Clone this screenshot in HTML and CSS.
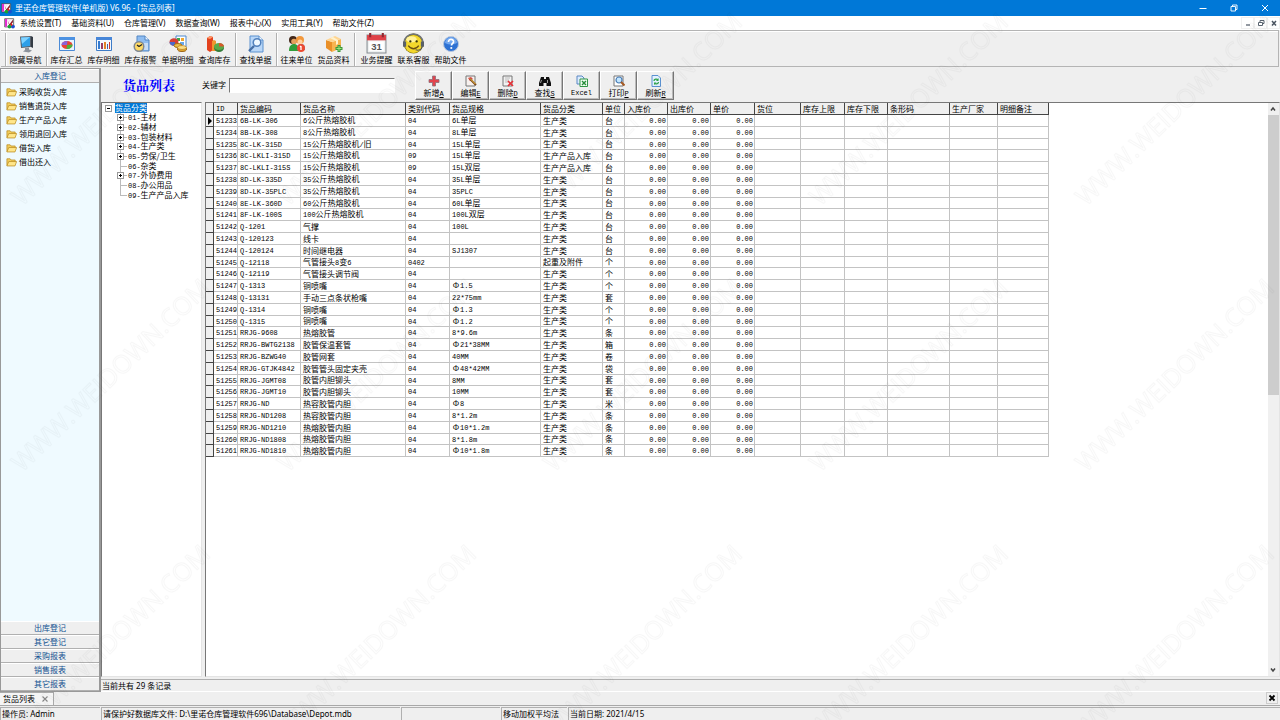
FILE: index.html
```html
<!DOCTYPE html>
<html lang="zh-CN">
<head>
<meta charset="utf-8">
<title>里诺仓库管理软件(单机版) V6.96 - [货品列表]</title>
<link rel="stylesheet" href="styles.css">
</head>
<body>
<svg width="0" height="0" class="defs" aria-hidden="true">
  <symbol id="logo" viewBox="0 0 16 16"><path d="M1 1h13v12H1z" fill="#fff" stroke="#333"/><path d="M1.500 1.500h3v11h-3z" fill="#e22bd0"/><path d="M5 3l3 6 5-7v4l-5 6z" fill="#8a1d2d"/><path d="M6 2h4l-2 4z" fill="#ffd8f0"/><circle cx="8" cy="12.500" r="2.800" fill="#16a533"/><circle cx="13" cy="12.500" r="2.800" fill="#1c4fd0"/><path d="M10 7l3 3-3 2z" fill="#e32218"/></symbol>
  <symbol id="folder" viewBox="0 0 12 12"><path d="M1 10V2.500h3.500l1 1.300H10V6" fill="#f3ce5c" stroke="#b98a1e" stroke-width=".8"/><path d="M1 10.300L3 5.500h8.600L9.800 10.300z" fill="#ffe68b" stroke="#b98a1e" stroke-width=".8"/></symbol>
</svg>

<header class="titlebar">
  <svg class="app-icon"><use href="#logo"/></svg>
  <h1 class="title">里诺仓库管理软件(单机版) V6.96 - [货品列表]</h1>
  <div class="window-buttons">
    <button aria-label="最小化"><svg viewBox="0 0 10 10"><path d="M1.500 5.500h7" stroke="#fff" fill="none"/></svg></button>
    <button aria-label="还原"><svg viewBox="0 0 10 10"><path d="M2 3.500h4.500V8H2zM3.500 3.500V2H8v4.500H6.500" stroke="#fff" fill="none" stroke-width=".9"/></svg></button>
    <button aria-label="关闭"><svg viewBox="0 0 10 10"><path d="M2 2l6 6M8 2L2 8" stroke="#fff" fill="none"/></svg></button>
  </div>
</header>

<nav class="menubar">
  <svg class="app-icon"><use href="#logo"/></svg>
  <button>系统设置(T)</button><button>基础资料(U)</button><button>仓库管理(V)</button><button>数据查询(W)</button><button>报表中心(X)</button><button>实用工具(Y)</button><button>帮助文件(Z)</button>
  <div class="child-buttons">
    <button aria-label="最小化子窗口"><svg viewBox="0 0 10 10"><path d="M3 7h4" stroke="#5a6470" stroke-width="1.300"/></svg></button>
    <button aria-label="还原子窗口"><svg viewBox="0 0 10 10"><path d="M2.500 4.500h4v3h-4zM4 4V2.500h4v3H7" stroke="#5a6470" fill="none"/></svg></button>
    <button aria-label="关闭子窗口"><svg viewBox="0 0 10 10"><path d="M3 3l4 4.500M7 3L3 7.500" stroke="#4a5460" stroke-width="1.500"/></svg></button>
  </div>
</nav>

<div class="toolbar">
  <div class="tool-group">
    <button><svg viewBox="0 0 18 18"><path d="M3 1.500l11-.5v11L4 13z" fill="#58606a"/><path d="M4 2.500l9-.5v9L5 12z" fill="#2d9fe8"/><path d="M4 2.500l9-.5-8 7z" fill="#7fd2ff"/><path d="M14 1l2 1v11l-2-1z" fill="#343b44"/><path d="M8 13l4-.5v2l3 1-3 2-6-1 2-1.500z" fill="#8b929b"/></svg>隐藏导航</button>
  </div>
  <div class="tool-group">
    <button><svg viewBox="0 0 18 18"><path d="M1.500 2.500h15v13h-15z" fill="#eaf4ff" stroke="#4b8bd6"/><path d="M1 2h16v3H1z" fill="#4d92e2"/><ellipse cx="9" cy="10" rx="5.500" ry="4" fill="#e84437"/><path d="M9 10H3.500a5.500 4 0 0 1 6-4z" fill="#8c63d8"/><path d="M9 10l5.500-.5a5.500 4 0 0 1-6 4.500z" fill="#49b43c"/></svg>库存汇总</button>
    <button><svg viewBox="0 0 18 18"><path d="M1.500 2.500h15v13h-15z" fill="#f3f8ff" stroke="#3e7cc7"/><path d="M1 2h16v3H1z" fill="#4786d8"/><path d="M3 6h2v8H3z" fill="#357bd0"/><path d="M6 8h2v6H6z" fill="#9b3b62"/><path d="M9 7h2v7H9z" fill="#e3832a"/><path d="M12 9h1v5h-1z" fill="#4560a8"/><path d="M14 7h1v7h-1z" fill="#d13b2f"/></svg>库存明细</button>
    <button><svg viewBox="0 0 18 18"><path d="M5 1h8l4 4v11H5z" fill="#8ebcf0" stroke="#5386c3"/><path d="M13 1v4h4" fill="#e7f2ff" stroke="#5386c3"/><path d="M12 8h4v7h-4z" fill="#c7dcf6"/><circle cx="7" cy="11.500" r="5.500" fill="#818891"/><circle cx="7" cy="11.500" r="4" fill="#ffda66"/><path d="M7 11.500l3-2M7 11.500L5 10" stroke="#222" stroke-width="1.200"/></svg>库存报警</button>
    <button><svg viewBox="0 0 18 18"><path d="M7 1h10v11H7z" fill="#fff" stroke="#4b87cf"/><path d="M8 3h3v3H8z" fill="#3daa48"/><path d="M12 3h3v3h-3z" fill="#f1a72e"/><path d="M11 7h4v3h-4z" fill="#68a6e8"/><ellipse cx="5" cy="7" rx="4.500" ry="3.800" fill="#d84136"/><path d="M.5 7H6v4A5 4 0 0 1 .5 7" fill="#4d69ca"/><ellipse cx="9" cy="10.500" rx="4" ry="2" fill="#edc34b" stroke="#a66d15"/><ellipse cx="13" cy="14" rx="4.500" ry="2.500" fill="#e4a82d" stroke="#9c6314"/><ellipse cx="13" cy="12.500" rx="4.500" ry="2" fill="#ffe084" stroke="#a66d15" stroke-width=".6"/></svg>单据明细</button>
    <button><svg viewBox="0 0 18 18"><path d="M1 3l3-2 3 1v13l-3 2-3-2z" fill="#e3421d"/><path d="M1 3l3-2 3 1-3 2z" fill="#ff9a6b"/><path d="M6 6l2-1 2 1v10H6z" fill="#f19530"/><ellipse cx="13" cy="13" rx="5" ry="4" fill="#347d3b"/><ellipse cx="13" cy="11.500" rx="5" ry="3.500" fill="#5aaa4a"/><path d="M13 11.500V8a5 3.500 0 0 1 5 3.500z" fill="#d85a2c"/></svg>查询库存</button>
  </div>
  <div class="tool-group">
    <button><svg viewBox="0 0 18 18"><path d="M3 1h9l4 4v12H3z" fill="#b9d7f8" stroke="#5b91cf"/><path d="M12 1v4h4" fill="#f3f9ff" stroke="#5b91cf"/><circle cx="10" cy="7.500" r="3.800" fill="#eef8ff" stroke="#5181bd" stroke-width="1.500"/><path d="M7 11l-5 5" stroke="#456fa5" stroke-width="2.400"/></svg>查找单据</button>
  </div>
  <div class="tool-group">
    <button><svg viewBox="0 0 18 18"><circle cx="5" cy="5" r="4" fill="#43291b"/><circle cx="6" cy="6.500" r="2.800" fill="#e4a05d"/><circle cx="12" cy="5" r="4" fill="#f2983c"/><circle cx="12" cy="7" r="2.500" fill="#ffd0a0"/><path d="M1 16c0-5 2-7 5-7s5 2 5 7z" fill="#2f9d39"/><path d="M9 15c0-4 1-6 4-6s4 2 4 6z" fill="#3c7fd6"/><circle cx="13" cy="13" r="4" fill="#ec4a32"/><path d="M13 11v4M12 12l1-1" stroke="#fff" stroke-width="1.300"/></svg>往来单位</button>
    <button><svg viewBox="0 0 18 18"><path d="M1 5l6 2v10l-6-4z" fill="#e98f28"/><path d="M7 7l9-3v9l-9 4z" fill="#f7b450"/><path d="M1 5l9-4 6 3-9 3z" fill="#ffd591"/><path d="M5 3l6 3v4l2-1V5L8 2z" fill="#fff1cd"/><path d="M14 10v7M10.500 13.500h7" stroke="#38983b" stroke-width="3"/><path d="M14 11v5M11.500 13.500h5" stroke="#9ae37b"/></svg>货品资料</button>
  </div>
  <div class="tool-group">
    <button><svg class="large" viewBox="0 0 20 20"><path d="M1 2h18v17H1z" fill="#eef1f1" stroke="#858c91"/><path d="M1 2h18v5H1z" fill="#df4147"/><path d="M4 0v4M16 0v4" stroke="#8e2830" stroke-width="2"/><path d="M3 8h14v9H3z" fill="#fff"/><text x="10" y="16" text-anchor="middle" class="calendar-day">31</text></svg>业务提醒</button>
    <button><svg class="large" viewBox="0 0 20 20"><circle cx="10" cy="10" r="9.500" fill="#817414"/><circle cx="10" cy="10.500" r="8.500" fill="#f3d72b"/><ellipse cx="8" cy="6" rx="5" ry="3" fill="#fff29a"/><circle cx="7" cy="8" r="1.100" fill="#34310d"/><circle cx="13" cy="8" r="1.100" fill="#34310d"/><path d="M5 12c3 4 7 4 10 0" stroke="#6b5012" stroke-width="1.300" fill="none"/><path d="M1 9a9 8 0 0 1 18 0" fill="none" stroke="#72767c" stroke-width="1.500"/><path d="M0 8h3v5H0zM17 8h3v5h-3z" fill="#596069"/><path d="M18 13c0 3-3 4-6 3" stroke="#555" fill="none"/></svg>联系客服</button>
    <button><svg viewBox="0 0 18 18"><circle cx="9" cy="9" r="7.500" fill="#2e73d6" stroke="#b9c8dd"/><path d="M3 8a6 6 0 0 1 12 0c-4 2-8 2-12 0" fill="#73a8ef"/><path d="M6.500 7c0-4 5.500-3 5 0-.3 1.500-2 1.500-2 3.500" stroke="#fff" stroke-width="1.700" fill="none"/><circle cx="9.300" cy="13" r="1.100" fill="#fff"/></svg>帮助文件</button>
  </div>
</div>

<div class="workspace">
  <aside class="sidebar">
    <button class="section">入库登记</button>
    <ul class="links">
      <li><button><svg><use href="#folder"/></svg>采购收货入库</button></li>
      <li><button><svg><use href="#folder"/></svg>销售退货入库</button></li>
      <li><button><svg><use href="#folder"/></svg>生产产品入库</button></li>
      <li><button><svg><use href="#folder"/></svg>领用退回入库</button></li>
      <li><button><svg><use href="#folder"/></svg>借货入库</button></li>
      <li><button><svg><use href="#folder"/></svg>借出还入</button></li>
    </ul>
    <button class="section">出库登记</button>
    <button class="section">其它登记</button>
    <button class="section">采购报表</button>
    <button class="section">销售报表</button>
    <button class="section">其它报表</button>
  </aside>

  <main class="document">
    <div class="actions">
      <h2>货品列表</h2>
      <label for="keyword">关键字</label>
      <input id="keyword" type="text">
      <div class="action-buttons">
        <button><svg viewBox="0 0 12 12"><path d="M4.500 1h3v3.500H11v3H7.500V11h-3V7.500H1v-3h3.500z" fill="#e3434d" stroke="#8d7078" stroke-width=".8"/></svg><span>新增<u>A</u></span></button>
        <button><svg viewBox="0 0 12 12"><path d="M1 1h9v10H1z" fill="#f7f1ee" stroke="#777"/><path d="M3 3l3-1 2 2-3 2z" fill="#d84a4a"/><path d="M5 4l6 6" stroke="#7b481a" stroke-width="2"/><path d="M5 3.500l5.500 5.500" stroke="#f3c346"/></svg><span>编辑<u>E</u></span></button>
        <button><svg viewBox="0 0 12 12"><path d="M1 1h9v10H1z" fill="#f2f2f2" stroke="#777"/><path d="M3 3h5M3 5h4M3 7h3" stroke="#bbb"/><path d="M6 6l5 5M11 6l-5 5" stroke="#e53238" stroke-width="1.700"/></svg><span>删除<u>D</u></span></button>
        <button><svg viewBox="0 0 12 12"><path d="M2 2h3v2h2V2h3l2 6v3H7.500V8h-3v3H0V8z" fill="#101010"/><path d="M2.500 5L1.500 8M8.500 5v3" stroke="#ddd" stroke-width=".7"/></svg><span>查找<u>S</u></span></button>
        <button><svg viewBox="0 0 12 12"><path d="M1 1h5l2 2v6H1z" fill="#dcebff" stroke="#5a88c2"/><path d="M4 4h7.500v7.500H4z" fill="#f2fff2" stroke="#319646"/><path d="M6 6l4 4M10 6l-4 4" stroke="#258c39" stroke-width="1.400"/></svg><span class="latin">Excel</span></button>
        <button><svg viewBox="0 0 12 12"><path d="M1 1h9v10H1z" fill="#fff" stroke="#777"/><circle cx="6" cy="5" r="3" fill="#c4e7ff" stroke="#4b7eb7" stroke-width="1.200"/><path d="M8 7l3.500 3.500" stroke="#a65a23" stroke-width="2"/></svg><span>打印<u>P</u></span></button>
        <button><svg viewBox="0 0 12 12"><path d="M2 .5h6l2.500 2.500v8.500H2z" fill="#e3f1ff" stroke="#5a91d0"/><path d="M4 6c0-2 3-2.500 4-1M8.500 7c0 2-3 2.500-4 1" stroke="#2da348" stroke-width="1.300" fill="none"/><path d="M8.500 3v3H6zM4 10V7.500h2.500z" fill="#2da348"/></svg><span>刷新<u>R</u></span></button>
      </div>
    </div>
    <div class="panes">
      <section class="tree" aria-label="货品分类">
        <button class="root"><i class="box minus"></i><span>货品分类</span></button>
        <ul>
          <li><i class="box"></i><span><b>01-</b>主材</span></li>
          <li><i class="box"></i><span><b>02-</b>辅材</span></li>
          <li><i class="box"></i><span><b>03-</b>包装材料</span></li>
          <li><i class="box"></i><span><b>04-</b>生产类</span></li>
          <li><i class="box"></i><span><b>05-</b>劳保/卫生</span></li>
          <li><span><b>06-</b>杂类</span></li>
          <li><i class="box"></i><span><b>07-</b>外协费用</span></li>
          <li><span><b>08-</b>办公用品</span></li>
          <li><span><b>09-</b>生产产品入库</span></li>
        </ul>
      </section>
      <section class="grid">
        <div class="grid-body">
          <table>
            <colgroup><col class="w8"><col class="w24"><col class="w63"><col class="w105"><col class="w44"><col class="w91"><col class="w62"><col class="w22"><col class="w43"><col class="w43"><col class="w44"><col class="w46"><col class="w44"><col class="w43"><col class="w62"><col class="w48"><col class="w51"></colgroup>
            <thead><tr><th></th><th><span class="mono">ID</span></th><th>货品编码</th><th>货品名称</th><th>类别代码</th><th>货品规格</th><th>货品分类</th><th>单位</th><th>入库价</th><th>出库价</th><th>单价</th><th>货位</th><th>库存上限</th><th>库存下限</th><th>条形码</th><th>生产厂家</th><th>明细备注</th></tr></thead>
            <tbody id="rows"></tbody>
          </table>
        </div>
        <div class="scrollbar">
          <svg viewBox="0 0 10 10"><path d="M3 6.500l2-2.500 2 2.500" stroke="#444" stroke-width="1.500" fill="none"/></svg>
          <div class="track"><div class="thumb"></div></div>
          <svg viewBox="0 0 10 10"><path d="M3 3.500L5 6l2-2.500" stroke="#444" stroke-width="1.500" fill="none"/></svg>
        </div>
      </section>
    </div>
    <div class="count">当前共有 29 条记录</div>
  </main>
</div>

<div class="tabs">
  <div class="tab"><span>货品列表</span><button aria-label="关闭标签"><svg viewBox="0 0 8 8"><path d="M1.500 1.500l5 5M6.500 1.500l-5 5" stroke="#888" stroke-width="1.100"/></svg></button></div>
  <button class="close-all" aria-label="关闭"><svg viewBox="0 0 8 8"><path d="M1.500 1.500l5 5M6.500 1.500l-5 5" stroke="#000" stroke-width="1.800"/></svg></button>
</div>
<footer class="statusbar">
  <span>操作员: Admin</span><span>请保护好数据库文件: D:\里诺仓库管理软件696\Database\Depot.mdb</span><span></span><span>移动加权平均法</span><span>当前日期: 2021/4/15</span>
</footer>

<svg class="watermark" aria-hidden="true">
  <defs><pattern id="mark" x="0" y="-55" width="266" height="266" patternUnits="userSpaceOnUse"><text transform="translate(22 262) rotate(-44)">WWW.WEIDOWN.COM</text></pattern></defs>
  <rect width="100%" height="100%" fill="url(#mark)"/>
</svg>
<script src="rows.js"></script>
</body>
</html>
```
FILE: rows.js
```js
// ID, code, name, class code, spec, category, unit
const items = `51233|6B-LK-306|6公斤热熔胶机|04|6L单层|生产类|台
51234|8B-LK-308|8公斤热熔胶机|04|8L单层|生产类|台
51235|8C-LK-315D|15公斤热熔胶机/旧|04|15L单层|生产类|台
51236|8C-LKLI-315D|15公斤热熔胶机|09|15L单层|生产产品入库|台
51237|8C-LKLI-315S|15公斤热熔胶机|09|15L双层|生产产品入库|台
51238|8D-LK-335D|35公斤热熔胶机|04|35L单层|生产类|台
51239|8D-LK-35PLC|35公斤热熔胶机|04|35PLC|生产类|台
51240|8E-LK-360D|60公斤热熔胶机|04|60L单层|生产类|台
51241|8F-LK-100S|100公斤热熔胶机|04|100L双层|生产类|台
51242|Q-1201|气撑|04|100L|生产类|台
51243|Q-120123|线卡|04||生产类|台
51244|Q-120124|时间继电器|04|SJ1307|生产类|台
51245|Q-12118|气管接头8变6|0402||起重及附件|个
51246|Q-12119|气管接头调节阀|04||生产类|个
51247|Q-1313|铜喷嘴|04|Φ1.5|生产类|个
51248|Q-13131|手动三点条状枪嘴|04|22*75mm|生产类|套
51249|Q-1314|铜喷嘴|04|Φ1.3|生产类|个
51250|Q-1315|铜喷嘴|04|Φ1.2|生产类|个
51251|RRJG-9608|热熔胶管|04|8*9.6m|生产类|条
51252|RRJG-BWTG2138|胶管保温套管|04|Φ21*38MM|生产类|箱
51253|RRJG-BZWG40|胶管网套|04|40MM|生产类|卷
51254|RRJG-GTJK4842|胶管管头固定夹壳|04|Φ48*42MM|生产类|袋
51255|RRJG-JGMT08|胶管内胆铆头|04|8MM|生产类|套
51256|RRJG-JGMT10|胶管内胆铆头|04|10MM|生产类|套
51257|RRJG-ND|热容胶管内胆|04|Φ8|生产类|米
51258|RRJG-ND1208|热容胶管内胆|04|8*1.2m|生产类|条
51259|RRJG-ND1210|热熔胶管内胆|04|Φ10*1.2m|生产类|条
51260|RRJG-ND1808|热熔胶管内胆|04|8*1.8m|生产类|条
51261|RRJG-ND1810|热熔胶管内胆|04|Φ10*1.8m|生产类|条`.split('\n').map(line => line.split('|'));

// Latin runs are set in the narrow monospaced face.
const text = s => s
  .replace(/[\x21-\x7e]+/g, run => `<span class="mono">${run}</span>`)
  .replace('Φ', '<span class="phi">Φ</span>');

document.getElementById('rows').innerHTML = items.map((item, i) =>
  `<tr><td class="mark">${i === 0 ? '<i class="pointer"></i>' : ''}</td>` +
  item.map((s, c) => `<td${c === 0 ? ' class="num"' : ''}>${text(s)}</td>`).join('') +
  `<td class="num">${text('0.00')}</td>`.repeat(3) +
  '<td></td>'.repeat(6) + '</tr>').join('');
```
FILE: styles.css
```css
* { box-sizing: border-box; }
body { margin: 0; height: 100vh; display: flex; flex-direction: column; overflow: hidden; background: #efefef; color: #000; font: 8px/12px "Noto Sans", "Noto Sans CJK SC", sans-serif; }
h1, h2, ul { margin: 0; padding: 0; font: inherit; list-style: none; }
button { margin: 0; padding: 0; border: 0; background: none; color: inherit; font: inherit; white-space: nowrap; }
svg { display: block; flex: none; }
.defs { position: absolute; }

.titlebar { flex: none; height: 16px; display: flex; align-items: center; gap: 3px; padding-left: 1px; background: #0078d7; color: #fff; }
.app-icon { width: 11px; height: 11px; }
.window-buttons { margin-left: auto; display: flex; }
.window-buttons button { width: 31px; display: flex; justify-content: center; }
.window-buttons svg { width: 10px; height: 10px; }

.menubar { flex: none; height: 14px; display: flex; align-items: center; gap: 10px; padding-left: 4px; background: #fff; }
.menubar > .app-icon { margin-right: -5px; }
.child-buttons { margin-left: auto; display: flex; }
.child-buttons button { width: 13px; height: 12px; display: flex; align-items: center; justify-content: center; border: 1px solid #f0f0f0; }
.child-buttons svg { width: 10px; height: 10px; }

.toolbar { flex: none; height: 37px; display: flex; margin: 0 1px; padding: 2px 0 0 4px; border: solid #b4b4b4; border-width: 1px 1px 1px 0; box-shadow: inset 0 1px #fff; }
.tool-group { display: flex; border-left: 1px solid #b0b0b0; box-shadow: inset 1px 0 #fff; padding: 0 2px 0 1px; }
.tool-group:last-child { padding-left: 3px; }
.tool-group button { width: 37px; display: flex; flex-direction: column; align-items: center; justify-content: flex-end; }
.tool-group svg { width: 18px; height: 18px; margin-bottom: 1px; }
.tool-group svg.large { width: 21px; height: 21px; margin-bottom: 0; }
.calendar-day { font: bold 9px "Liberation Sans", sans-serif; fill: #555; }

.workspace { flex: 1; min-height: 0; display: flex; padding-top: 1px; }
.sidebar { flex: none; width: 101px; display: flex; flex-direction: column; border: solid #999; border-width: 1px 2px 1px 1px; background: #effaff; }
.section { flex: none; height: 14px; background: #efefef; border: solid; border-width: 1px 0; border-color: #fff #aaa #b0b0b0; color: #105090; }
.links { flex: 1; padding: 2px 5px; }
.links button { height: 14px; display: flex; align-items: center; gap: 2px; }
.links svg { width: 11px; height: 12px; }

.document { flex: 1; min-width: 0; display: flex; flex-direction: column; }
.actions { flex: none; height: 34px; display: flex; align-items: center; padding-left: 22px; }
.actions h2 { width: 79px; color: #00f; font: bold 13px/18px "Noto Serif CJK SC", "Noto Sans CJK SC", serif; }
.actions label { width: 27px; }
.actions input { width: 166px; height: 15px; padding: 0 2px; border: 1px solid; border-color: #777 #fff #fff #777; border-radius: 0; background: #fff; font: inherit; outline: 0; }
.action-buttons { display: flex; margin-left: 20px; }
.action-buttons button { width: 37px; height: 29px; display: flex; flex-direction: column; align-items: center; justify-content: space-between; padding-top: 3px; border: 1px solid; border-color: #fff #777 #777 #fff; box-shadow: inset -1px -1px #bbb; }
.action-buttons svg { width: 12px; height: 12px; }
.action-buttons u, .latin { font-family: "Liberation Mono", monospace; font-size: 7px; }

.panes { flex: 1; min-height: 0; display: flex; gap: 3px; }
.tree, .grid { border: 1px solid; border-color: #777 #e4e4e4 #e4e4e4 #777; background: #fff; font-family: "Noto Sans CJK SC", sans-serif; line-height: 10px; }
.tree { flex: none; width: 101px; padding-left: 3px; }
.root { height: 10px; display: flex; align-items: center; gap: 3px; line-height: 10px; }
.root span { background: #0078d7; color: #fff; }
.tree ul { height: 87px; display: grid; grid-auto-rows: 1fr; margin-left: 4px; line-height: 8px; }
.tree li { min-height: 0; display: grid; grid-template-columns: 19px 1fr; align-items: center; background: linear-gradient(#bbb, #bbb) 11px 50% / 7px 1px no-repeat, linear-gradient(#bbb, #bbb) 11px 0 / 1px 100% no-repeat; }
.tree li:last-child { background-size: 7px 1px, 1px 50%; }
.tree li span { grid-column: 2; white-space: nowrap; }
.tree b { font: 7px/7px "Liberation Mono", monospace; }
.box { width: 7px; height: 7px; border: 1px solid #999; background: linear-gradient(#000, #000) 50% / 3px 1px no-repeat, linear-gradient(#000, #000) 50% / 1px 3px no-repeat, #fff; }
.box.minus { background: linear-gradient(#000, #000) 50% / 3px 1px no-repeat, #fff; }
.tree li .box { grid-row: 1; margin-left: 8px; }
.tree li .box + span { grid-row: 1; }

.grid { flex: 1; min-width: 0; display: flex; }
.grid-body { flex: 1; min-width: 0; overflow: hidden; }
table { width: 843px; table-layout: fixed; border-collapse: separate; border-spacing: 0; line-height: 8px; }
th, td { padding: 0 1px 0 2px; overflow: hidden; white-space: nowrap; text-align: left; font-weight: normal; border: solid #c3c3c3; border-width: 0 1px 1px 0; }
th { height: 12px; background: #efefef; border-color: #444; }
td { height: 12px; }
tr:nth-child(5n + 3) td { height: 11px; }
td.mark { padding: 0; background: #efefef; border-color: #444; }
.pointer { display: block; margin-left: 2px; width: 4px; height: 8px; border: solid transparent; border-width: 4px 0 4px 4px; border-left-color: #000; }
.mono { font: 7px/7px "Liberation Mono", monospace; }
.phi { display: inline-block; width: 8px; text-align: center; }
td.num { text-align: right; }
.w8 { width: 8px; } .w22 { width: 22px; } .w24 { width: 24px; } .w43 { width: 43px; } .w44 { width: 44px; } .w46 { width: 46px; }
.w48 { width: 48px; } .w51 { width: 51px; } .w62 { width: 62px; } .w63 { width: 63px; } .w91 { width: 91px; } .w105 { width: 105px; }

.scrollbar { flex: none; width: 11px; display: flex; flex-direction: column; background: #f0f0f0; }
.scrollbar svg { width: 10px; height: 12px; }
.track { flex: 1; }
.thumb { height: 51%; background: #cdcdcd; }
.count { flex: none; height: 13px; margin-top: 2px; padding-left: 1px; border-top: 1px solid #b0b0b0; border-bottom: 1px solid #fff; }

.tabs { flex: none; height: 14px; display: flex; justify-content: space-between; border-bottom: 1px solid #a8a8a8; }
.tab { display: flex; align-items: center; gap: 6px; padding: 0 4px 0 3px; border: solid #aaa; border-width: 1px 1px 0 0; background: #f5f5f5; }
.tab svg, .close-all svg { width: 8px; height: 8px; }
.close-all { width: 12px; height: 12px; display: flex; align-items: center; justify-content: center; margin-right: 2px; border: 1px solid #ccc; }
.statusbar { flex: none; height: 13px; display: grid; grid-template-columns: 100px 299px 99px 66px 1fr; gap: 1px; margin-top: 1px; }
.statusbar span { padding-left: 1px; border: solid #b0b0b0; border-width: 1px 0 0 1px; line-height: 12px; overflow: hidden; white-space: nowrap; }

.watermark { position: absolute; inset: 0; width: 100%; height: 100%; pointer-events: none; }
.watermark text { font: 25px "Open Sans", sans-serif; fill: none; stroke: #000; stroke-opacity: .03; stroke-width: 1px; }
```
